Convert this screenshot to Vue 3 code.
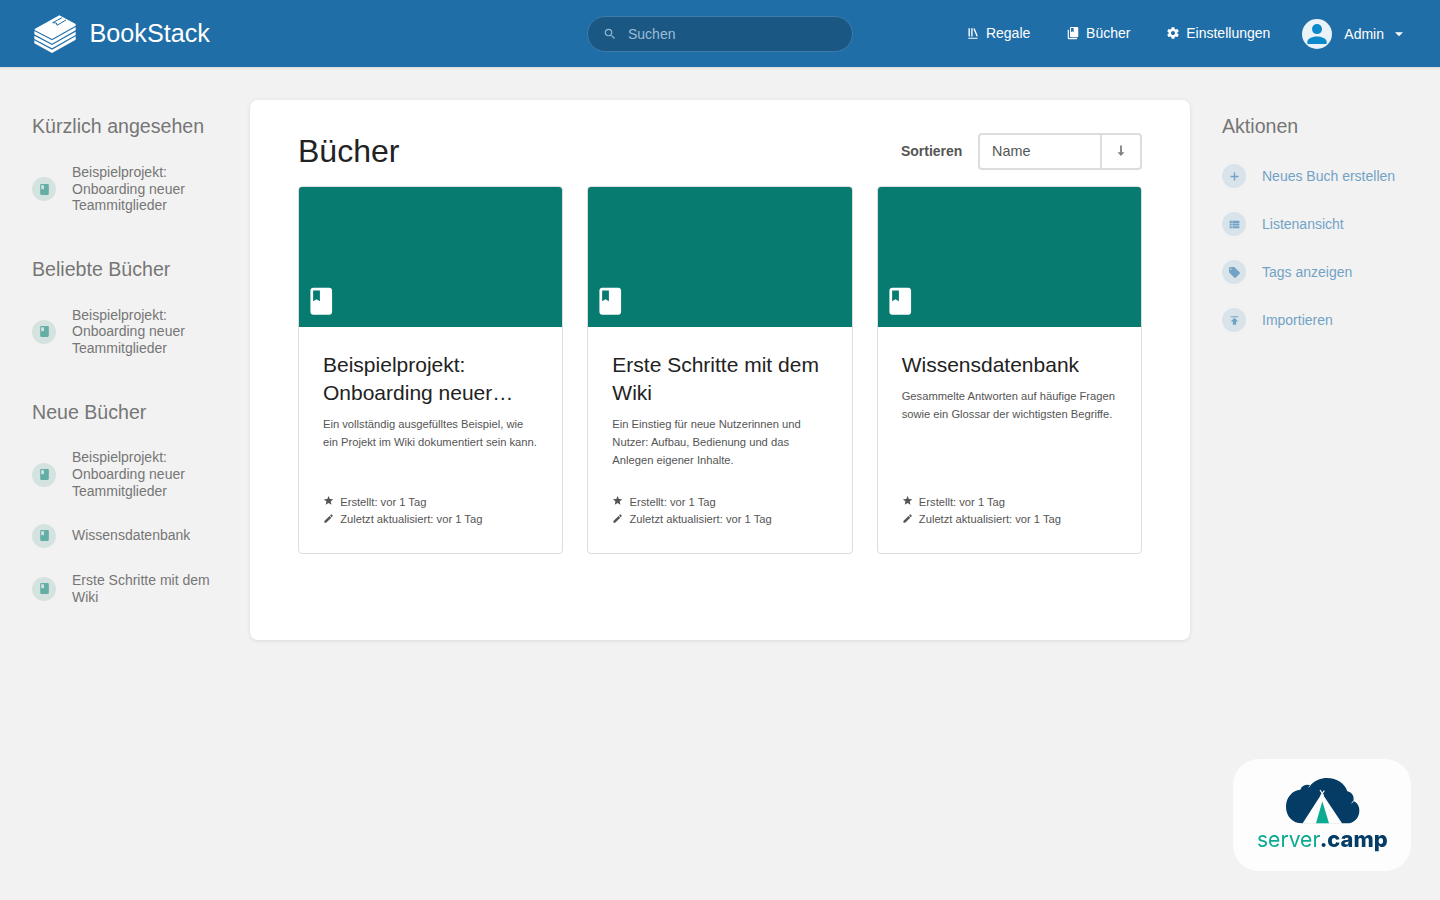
<script setup>
import { ref } from 'vue';

const icons = {
  book: 'M18 2H6c-1.1 0-2 .9-2 2v16c0 1.1.9 2 2 2h12c1.1 0 2-.9 2-2V4c0-1.1-.9-2-2-2zM6 4h5v8l-2.5-1.5L6 12V4z',
  books:
    'M19.252 1.708H8.663a1.77 1.77 0 0 0-1.765 1.764v14.12c0 .97.794 1.764 1.765 1.764h10.59a1.77 1.77 0 0 0 1.764-1.765V3.472a1.77 1.77 0 0 0-1.765-1.764zM8.663 3.472h4.412v7.06L10.87 9.208l-2.206 1.324zM2.966 6.61v14c0 1.1.9 2 2 2h14v-2h-14v-14z',
  shelves:
    'M4 20.058h15.892V22H4zM6.658 3.643V18h-2.38V3.643zM11.326 3.643V18H8.947V3.643zM14.722 3.856l5.613 13.214-2.19.93-5.613-13.214z',
  settings:
    'M19.43 12.98c.04-.32.07-.64.07-.98s-.03-.66-.07-.98l2.11-1.65c.19-.15.24-.42.12-.64l-2-3.46c-.12-.22-.39-.3-.61-.22l-2.49 1c-.52-.4-1.08-.73-1.69-.98l-.38-2.65C14.46 2.18 14.25 2 14 2h-4c-.25 0-.46.18-.49.42l-.38 2.65c-.61.25-1.17.59-1.69.98l-2.49-1c-.23-.09-.49 0-.61.22l-2 3.46c-.13.22-.07.49.12.64l2.11 1.65c-.04.32-.07.65-.07.98s.03.66.07.98l-2.11 1.65c-.19.15-.24.42-.12.64l2 3.46c.12.22.39.3.61.22l2.49-1c.52.4 1.08.73 1.69.98l.38 2.65c.03.24.24.42.49.42h4c.25 0 .46-.18.49-.42l.38-2.65c.61-.25 1.17-.59 1.69-.98l2.49 1c.23.09.49 0 .61-.22l2-3.46c.12-.22.07-.49-.12-.64l-2.11-1.65zM12 15.5c-1.93 0-3.5-1.57-3.5-3.5s1.57-3.5 3.5-3.5 3.5 1.57 3.5 3.5-1.57 3.5-3.5 3.5z',
  search:
    'M15.5 14h-.79l-.28-.27A6.471 6.471 0 0 0 16 9.5 6.5 6.5 0 1 0 9.5 16c1.61 0 3.09-.59 4.23-1.57l.27.28v.79l5 4.99L20.49 19l-4.99-5zm-6 0C7.01 14 5 11.99 5 9.5S7.01 5 9.5 5 14 7.01 14 9.5 11.99 14 9.5 14z',
  caret: 'M4 8.5l8 8 8-8z',
  add: 'M19.5 13.3h-6.2v6.2h-2.6v-6.2H4.500v-2.600h6.200V4.500h2.600v6.200h6.200z',
  list: 'M3 14h4v-4H3v4zm0 5h4v-4H3v4zM3 9h4V5H3v4zm5 5h13v-4H8v4zm0 5h13v-4H8v4zM8 5v4h13V5H8z',
  tag: 'M21.41 11.58l-9-9C12.05 2.22 11.55 2 11 2H4c-1.1 0-2 .9-2 2v7c0 .55.22 1.05.59 1.42l9 9c.36.36.86.58 1.41.58.55 0 1.05-.22 1.41-.59l7-7c.37-.36.59-.86.59-1.41 0-.55-.23-1.06-.59-1.42zM5.5 7C4.67 7 4 6.33 4 5.5S4.67 4 5.5 4 7 4.67 7 5.5 6.33 7 5.5 7z',
  upload: 'M5 4v2h14V4H5zm0 10h4v6h6v-6h4l-7-7-7 7z',
  star: 'M12 17.27L18.18 21l-1.64-7.03L22 9.24l-7.19-.61L12 2 9.19 8.63 2 9.24l5.46 4.73L5.82 21z',
  edit: 'M3 17.25V21h3.75L17.81 9.94l-3.75-3.75L3 17.25zM20.71 7.04a.996.996 0 0 0 0-1.41l-2.34-2.34a.996.996 0 0 0-1.41 0l-1.83 1.83 3.75 3.75 1.83-1.83z',
};

const search = ref('');

const navLinks = [
  { icon: 'shelves', label: 'Regale' },
  { icon: 'books', label: 'Bücher' },
  { icon: 'settings', label: 'Einstellungen' },
];

const onboarding = 'Beispielprojekt: Onboarding neuer Teammitglieder';

const sections = [
  { title: 'Kürzlich angesehen', items: [onboarding] },
  { title: 'Beliebte Bücher', items: [onboarding] },
  {
    title: 'Neue Bücher',
    items: [onboarding, 'Wissensdatenbank', 'Erste Schritte mit dem Wiki'],
  },
];

const books = [
  {
    title: 'Beispielprojekt: Onboarding neuer…',
    text: 'Ein vollständig ausgefülltes Beispiel, wie ein Projekt im Wiki dokumentiert sein kann.',
  },
  {
    title: 'Erste Schritte mit dem Wiki',
    text: 'Ein Einstieg für neue Nutzerinnen und Nutzer: Aufbau, Bedienung und das Anlegen eigener Inhalte.',
  },
  {
    title: 'Wissensdatenbank',
    text: 'Gesammelte Antworten auf häufige Fragen sowie ein Glossar der wichtigsten Begriffe.',
  },
];

const actions = [
  { icon: 'add', label: 'Neues Buch erstellen' },
  { icon: 'list', label: 'Listenansicht' },
  { icon: 'tag', label: 'Tags anzeigen' },
  { icon: 'upload', label: 'Importieren' },
];
</script>

<template>
  <div class="page">
    <header class="header">
      <a class="logo">
        <svg class="logo-image" viewBox="42 43 126 114">
          <path d="M44 85L118 44L167 70V75L96 115L44 88z" />
          <path d="M43 91L96 119L167 79V89L96 129L43 101z" />
          <path d="M43 105L96 133L167 93V103L96 143L43 115z" />
          <path d="M43 119L96 147L167 107V117L96 157L43 128z" />
          <path class="logo-line" d="M126 51L98 66L109 67L111 74L138 58" />
        </svg>
        <span>BookStack</span>
      </a>

      <form class="search" @submit.prevent>
        <svg viewBox="0 0 24 24"><path :d="icons.search" /></svg>
        <input v-model="search" type="text" placeholder="Suchen" />
      </form>

      <div class="header-right">
        <nav class="links">
          <a v-for="link in navLinks" :key="link.label">
            <svg viewBox="0 0 24 24"><path :d="icons[link.icon]" /></svg>
            <span>{{ link.label }}</span>
          </a>
        </nav>
        <div class="user">
          <svg class="avatar" viewBox="0 0 30 30">
            <circle cx="15" cy="15" r="15" fill="#eaf3f8" />
            <circle cx="15" cy="10.1" r="5" fill="#0d88cb" />
            <path d="M5.4 24.9v-2.3c0-3.6 6.2-5.2 9.6-5.2s9.6 1.6 9.6 5.2v2.3z" fill="#0d88cb" />
          </svg>
          <span>Admin</span>
          <svg class="caret" viewBox="0 0 24 24"><path :d="icons.caret" /></svg>
        </div>
      </div>
    </header>

    <div class="columns">
      <aside class="sidebar left">
        <section v-for="section in sections" :key="section.title">
          <h5>{{ section.title }}</h5>
          <a v-for="item in section.items" :key="item" class="entry">
            <span class="bubble book">
              <svg viewBox="0 0 24 24"><path :d="icons.book" /></svg>
            </span>
            <span>{{ item }}</span>
          </a>
        </section>
      </aside>

      <main class="content">
        <div class="content-head">
          <h1>Bücher</h1>
          <div class="sort">
            <span class="sort-label">Sortieren</span>
            <div class="sort-control">
              <button class="sort-name">Name</button>
              <button class="sort-dir">
                <svg viewBox="0 0 12 14">
                  <path d="M5.1 1.5h1.8v6.8h2.6L6 12 2.5 8.3h2.6z" />
                </svg>
              </button>
            </div>
          </div>
        </div>

        <div class="grid">
          <a v-for="book in books" :key="book.title" class="card">
            <div class="cover">
              <svg viewBox="0 0 24 24"><path :d="icons.book" /></svg>
            </div>
            <div class="card-body">
              <h2>{{ book.title }}</h2>
              <p>{{ book.text }}</p>
            </div>
            <div class="card-footer">
              <div>
                <svg viewBox="0 0 24 24"><path :d="icons.star" /></svg>
                <span>Erstellt: vor 1 Tag</span>
              </div>
              <div>
                <svg viewBox="0 0 24 24"><path :d="icons.edit" /></svg>
                <span>Zuletzt aktualisiert: vor 1 Tag</span>
              </div>
            </div>
          </a>
        </div>
      </main>

      <aside class="sidebar right">
        <h5>Aktionen</h5>
        <a v-for="action in actions" :key="action.label" class="entry action">
          <span class="bubble">
            <svg viewBox="0 0 24 24"><path :d="icons[action.icon]" /></svg>
          </span>
          <span>{{ action.label }}</span>
        </a>
      </aside>
    </div>

    <!-- Hosting badge -->
    <a class="badge">
      <svg viewBox="24 27 534 336">
        <path
          fill="#043c66"
          d="M232 220C202 220 183 198 183 170C183 141 203 121 226 119C230 106 245 101 256 106C270 91 288 84 306 84C336 84 360 101 367 124C381 127 389 140 385 153C397 158 403 168 403 182C403 204 387 220 366 220z"
        />
        <path d="M256 106L251 112M385 153L380 160" fill="none" stroke="#fdfdfd" stroke-width="2.5" />
        <path d="M291 130L232 221H352z" fill="#fdfdfd" />
        <path d="M285 120L296 137M298 122L287 137" fill="none" stroke="#fdfdfd" stroke-width="3.5" />
        <path d="M292 154L273 220H312z" fill="#0bab92" />
        <text class="brand-light" x="96" y="290" textLength="190" lengthAdjust="spacingAndGlyphs">server</text>
        <text class="brand-bold" x="284" y="290" textLength="204" lengthAdjust="spacingAndGlyphs">.camp</text>
      </svg>
    </a>
  </div>
</template>

<style>
body {
  margin: 0;
  background: #f2f2f2;
}
</style>

<style scoped>
.page {
  min-height: 900px;
  font-family: "Liberation Sans", Arial, sans-serif;
  font-size: 14px;
  color: #444;
}
svg {
  display: block;
  flex: none;
  fill: currentColor;
}
h1,
h2,
h5,
p {
  margin: 0;
  font-weight: 400;
}

/* Header */
.header {
  display: grid;
  grid-template-columns: 1fr 266px 1fr;
  align-items: center;
  height: 67px;
  box-sizing: border-box;
  padding: 0 34px;
  background: #206ea7;
  color: #fff;
  box-shadow: 0 1px 3px rgba(0, 0, 0, 0.12);
}
.logo {
  display: flex;
  align-items: center;
  gap: 13.5px;
  font-size: 25.2px;
}
.logo-image {
  width: 42px;
  height: 38px;
}
.logo-line {
  fill: none;
  stroke: #206ea7;
  stroke-width: 3;
}
.search {
  display: flex;
  align-items: center;
  gap: 11px;
  height: 36px;
  box-sizing: border-box;
  padding: 1px 15px 0;
  border: 1px solid #3d7cab;
  border-radius: 18px;
  background: #1a5883;
  color: #91b8d3;
}
.search svg {
  width: 14px;
  height: 14px;
}
.search input {
  flex: 1;
  min-width: 0;
  padding: 0;
  border: 0;
  outline: 0;
  background: none;
  font: inherit;
  color: #fff;
}
.search input::placeholder {
  color: #9bbdd6;
  opacity: 1;
}
.header-right {
  display: flex;
  justify-content: flex-end;
  align-items: center;
  gap: 32px;
}
.links {
  display: flex;
  gap: 35.8px;
  padding-bottom: 2px;
}
.links a {
  display: flex;
  align-items: center;
  gap: 6px;
}
.links svg {
  width: 14px;
  height: 14px;
}
.user {
  display: flex;
  align-items: center;
  padding-top: 1px;
}
.avatar {
  width: 30px;
  height: 30px;
  margin-right: 12px;
}
.caret {
  width: 12px;
  height: 12px;
  margin: 0 1px 0 9px;
}

/* Columns */
.columns {
  display: grid;
  grid-template-columns: 218px 940px 218px;
  gap: 32px;
  align-items: start;
}
.sidebar {
  padding-top: 47px;
  color: #767676;
}
.left {
  padding-left: 32px;
}
.sidebar h5 {
  height: 24px;
  margin-bottom: 14px;
  font-size: 19.6px;
  line-height: 24px;
}
.left h5 {
  margin-bottom: 13.86px;
}
.sidebar section {
  margin-bottom: 30.5px;
}
.entry {
  display: flex;
  align-items: center;
  gap: 16px;
  padding: 12px 0;
  line-height: 16.8px;
}
.action {
  color: #72a2c6;
}
.bubble {
  display: flex;
  flex: none;
  align-items: center;
  justify-content: center;
  width: 24px;
  height: 24px;
  border-radius: 50%;
  background: #d9e3ea;
}
.bubble svg {
  width: 13px;
  height: 13px;
}
.bubble.book {
  background: #d5e3e0;
  color: #65aea6;
}

/* Content */
.content {
  min-height: 540px;
  box-sizing: border-box;
  margin-top: 33px;
  padding: 33px 48px;
  border-radius: 8px;
  background: #fff;
  box-shadow: 0 1px 4px rgba(0, 0, 0, 0.1);
}
.content-head {
  display: flex;
  align-items: center;
  justify-content: space-between;
  height: 37px;
  margin-bottom: 16px;
}
h1 {
  font-size: 32px;
  color: #222;
}
.sort {
  display: flex;
  align-items: center;
  gap: 15.6px;
}
.sort-label {
  padding-bottom: 2px;
  font-weight: 700;
  color: #555;
}
.sort-control {
  display: flex;
  width: 164px;
  height: 37px;
  box-sizing: border-box;
  border: 2px solid #ddd;
  border-radius: 4px;
}
.sort-control button {
  padding: 0 0 2px;
  border: 0;
  background: none;
  color: #555;
  font: inherit;
  font-size: 14.4px;
}
.sort-control .sort-name {
  flex: 1;
  padding-left: 12px;
  text-align: left;
}
.sort-control .sort-dir {
  display: flex;
  align-items: center;
  justify-content: center;
  width: 40px;
  border-left: 2px solid #ddd;
  color: #808080;
}
.sort-dir svg {
  width: 12px;
  height: 14px;
}
.grid {
  display: grid;
  grid-template-columns: repeat(3, 1fr);
  gap: 24px;
}
.card {
  display: flex;
  flex-direction: column;
  height: 368px;
  box-sizing: border-box;
  overflow: hidden;
  border: 1px solid #ddd;
  border-radius: 4px;
}
.cover {
  display: flex;
  align-items: flex-end;
  height: 140px;
  box-sizing: border-box;
  padding: 0 0 10px 5.9px;
  background: #077b70;
  color: #fff;
}
.cover svg {
  width: 32.5px;
  height: 32.5px;
}
.card-body {
  flex: 1;
  padding: 24px 24px 0;
}
.card h2 {
  margin-bottom: 9.88px;
  font-size: 21px;
  line-height: 27.6px;
  color: #222;
}
.card p {
  font-size: 11.2px;
  line-height: 17.92px;
  color: #555;
}
.card-footer {
  padding: 0 24px 24.3px;
  font-size: 11.2px;
  line-height: 17.5px;
  color: #555;
}
.card-footer div {
  display: flex;
  align-items: center;
  gap: 6px;
}
.card-footer svg {
  width: 11.2px;
  height: 11.2px;
  margin-top: -3px;
}

/* Badge */
.badge {
  position: fixed;
  right: 29px;
  bottom: 29px;
  width: 178px;
  height: 112px;
  overflow: hidden;
  border-radius: 26px;
  background: #fdfdfd;
}
.badge svg {
  width: 178px;
  height: 112px;
}
.brand-light,
.brand-bold {
  font-family: Inter, "Open Sans", sans-serif;
  font-size: 66px;
}
.brand-light {
  font-weight: 400;
  fill: #0bab92;
}
.brand-bold {
  font-weight: 800;
  fill: #043c66;
}
</style>
